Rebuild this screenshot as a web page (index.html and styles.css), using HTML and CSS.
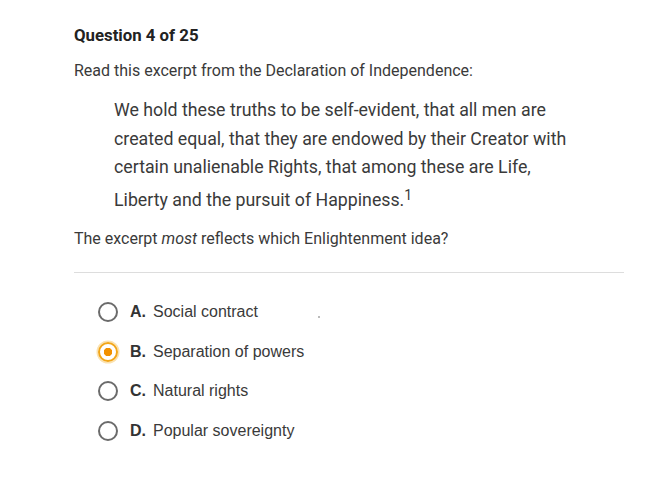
FILE: index.html
```html
<!DOCTYPE html>
<html>
<head>
<meta charset="utf-8">
<link rel="stylesheet" href="styles.css">
</head>
<body>
<div class="page">
  <h1 class="title">Question 4 of 25</h1>
  <p class="intro">Read this excerpt from the Declaration of Independence:</p>
  <blockquote class="quote">We hold these truths to be self-evident, that all men are created equal, that they are endowed by their Creator with certain unalienable Rights, that among these are Life, Liberty and the pursuit of Happiness.<sup>1</sup></blockquote>
  <p class="prompt">The excerpt <em>most</em> reflects which Enlightenment idea?</p>
  <hr class="rule">
  <ul class="options">
    <li class="option"><span class="radio"></span><span class="letter">A.</span><span class="label">Social contract</span><span class="speck"></span></li>
    <li class="option selected"><span class="radio"></span><span class="letter">B.</span><span class="label">Separation of powers</span></li>
    <li class="option"><span class="radio"></span><span class="letter">C.</span><span class="label">Natural rights</span></li>
    <li class="option"><span class="radio"></span><span class="letter">D.</span><span class="label">Popular sovereignty</span></li>
  </ul>
</div>
</body>
</html>
```

FILE: styles.css
```css
html, body {
  margin: 0;
  padding: 0;
  background: #ffffff;
}
body {
  font-family: Roboto, "Liberation Sans", sans-serif;
  color: #3a3a3a;
}
.page {
  padding: 25px 26px 0 74px;
  width: 550px;
}
.title {
  margin: 0;
  font-size: 16.8px;
  font-weight: 700;
  color: #222222;
  line-height: 20px;
}
.intro {
  margin: 17px 0 0 0;
  font-size: 16px;
  line-height: 18px;
}
.quote {
  margin: 16px 0 0 40px;
  width: 462px;
  font-size: 17.75px;
  line-height: 28.5px;
}
.quote sup {
  font-size: 14px;
  line-height: 27px;
  vertical-align: 6px;
}
.prompt {
  margin: 16px 0 0 0;
  font-size: 16px;
  line-height: 18px;
}
.prompt em {
  font-style: italic;
}
.rule {
  margin: 24px 0 0 0;
  border: 0;
  border-top: 1px solid #dddddd;
  height: 0;
}
.options {
  list-style: none;
  margin: 29px 0 0 24px;
  padding: 0;
  display: flex;
  flex-direction: column;
  gap: 19.7px;
}
.option {
  display: flex;
  align-items: center;
  height: 20px;
  font-family: "Liberation Sans", Arial, sans-serif;
  font-size: 16px;
  color: #3a3a3a;
  position: relative;
}
.radio {
  box-sizing: border-box;
  width: 20px;
  height: 20px;
  border: 2px solid #6b6b6b;
  border-radius: 50%;
  margin-right: 12px;
  flex: none;
}
.selected .radio {
  border-color: #f2a619;
  background: radial-gradient(circle, #f29100 0 4px, #ffffff 4.5px);
  box-shadow: 0 0 0 1.5px #fbe2b0;
}
.letter {
  font-weight: 700;
  color: #333333;
  width: 23px;
  flex: none;
}
.speck {
  position: absolute;
  left: 220px;
  top: 14px;
  width: 2px;
  height: 2px;
  background: #bbbbbb;
}
```
